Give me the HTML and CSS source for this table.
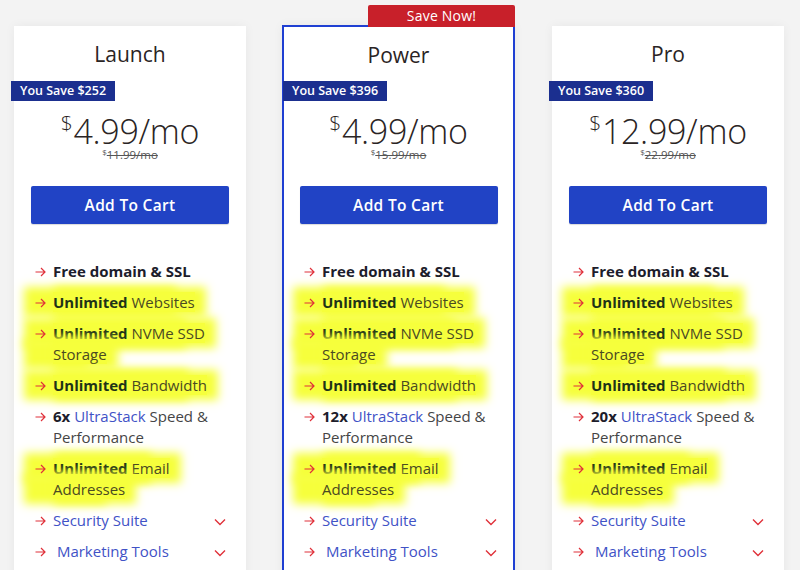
FILE: index.html
```html
<!DOCTYPE html>
<html>
<head>
<meta charset="utf-8">
<link rel="stylesheet" href="styles.css">
</head>
<body>
<svg width="0" height="0" class="defs">
  <defs>
    <symbol id="arr" viewBox="0 0 11 10"><path d="M0.5 5H10M6 1l4 4-4 4" fill="none" stroke="currentColor" stroke-width="1.2"/></symbol>
    <symbol id="chev" viewBox="0 0 12 8"><path d="M1 1.5l5 5 5-5" fill="none" stroke="currentColor" stroke-width="1.4"/></symbol>
  </defs>
</svg>
<div class="plans">
  <div class="card">
    <h2 class="title">Launch</h2>
    <div class="badge">You Save $252</div>
    <div class="price"><sup class="cur">$</sup>4.99/mo</div>
    <div class="old"><sup>$</sup><s>11.99/mo</s></div>
    <button class="cart">Add To Cart</button>
    <ul class="feats">
      <li><svg class="ar"><use href="#arr"/></svg><span class="tx"><b>Free domain &amp; SSL</b></span></li>
      <li><svg class="ar"><use href="#arr"/></svg><span class="tx"><span class="hl"><b>Unlimited</b> Websites</span></span></li>
      <li><svg class="ar"><use href="#arr"/></svg><span class="tx"><span class="hl"><b>Unlimited</b> NVMe SSD Storage</span></span></li>
      <li><svg class="ar"><use href="#arr"/></svg><span class="tx"><span class="hl"><b>Unlimited</b> Bandwidth</span></span></li>
      <li><svg class="ar"><use href="#arr"/></svg><span class="tx"><b>6x</b> <span class="lk">UltraStack</span> Speed &amp; Performance</span></li>
      <li><svg class="ar"><use href="#arr"/></svg><span class="tx"><span class="hl"><b>Unlimited</b> Email Addresses</span></span></li>
      <li class="more"><svg class="ar"><use href="#arr"/></svg><span class="tx lk">Security Suite</span><svg class="chev"><use href="#chev"/></svg></li>
      <li class="more"><svg class="ar"><use href="#arr"/></svg><span class="tx lk">&nbsp;Marketing Tools</span><svg class="chev"><use href="#chev"/></svg></li>
    </ul>
  </div>
  <div class="card featured">
    <div class="tab">Save Now!</div>
    <h2 class="title">Power</h2>
    <div class="badge">You Save $396</div>
    <div class="price"><sup class="cur">$</sup>4.99/mo</div>
    <div class="old"><sup>$</sup><s>15.99/mo</s></div>
    <button class="cart">Add To Cart</button>
    <ul class="feats">
      <li><svg class="ar"><use href="#arr"/></svg><span class="tx"><b>Free domain &amp; SSL</b></span></li>
      <li><svg class="ar"><use href="#arr"/></svg><span class="tx"><span class="hl"><b>Unlimited</b> Websites</span></span></li>
      <li><svg class="ar"><use href="#arr"/></svg><span class="tx"><span class="hl"><b>Unlimited</b> NVMe SSD Storage</span></span></li>
      <li><svg class="ar"><use href="#arr"/></svg><span class="tx"><span class="hl"><b>Unlimited</b> Bandwidth</span></span></li>
      <li><svg class="ar"><use href="#arr"/></svg><span class="tx"><b>12x</b> <span class="lk">UltraStack</span> Speed &amp; Performance</span></li>
      <li><svg class="ar"><use href="#arr"/></svg><span class="tx"><span class="hl"><b>Unlimited</b> Email Addresses</span></span></li>
      <li class="more"><svg class="ar"><use href="#arr"/></svg><span class="tx lk">Security Suite</span><svg class="chev"><use href="#chev"/></svg></li>
      <li class="more"><svg class="ar"><use href="#arr"/></svg><span class="tx lk">&nbsp;Marketing Tools</span><svg class="chev"><use href="#chev"/></svg></li>
    </ul>
  </div>
  <div class="card">
    <h2 class="title">Pro</h2>
    <div class="badge">You Save $360</div>
    <div class="price"><sup class="cur">$</sup>12.99/mo</div>
    <div class="old"><sup>$</sup><s>22.99/mo</s></div>
    <button class="cart">Add To Cart</button>
    <ul class="feats">
      <li><svg class="ar"><use href="#arr"/></svg><span class="tx"><b>Free domain &amp; SSL</b></span></li>
      <li><svg class="ar"><use href="#arr"/></svg><span class="tx"><span class="hl"><b>Unlimited</b> Websites</span></span></li>
      <li><svg class="ar"><use href="#arr"/></svg><span class="tx"><span class="hl"><b>Unlimited</b> NVMe SSD Storage</span></span></li>
      <li><svg class="ar"><use href="#arr"/></svg><span class="tx"><span class="hl"><b>Unlimited</b> Bandwidth</span></span></li>
      <li><svg class="ar"><use href="#arr"/></svg><span class="tx"><b>20x</b> <span class="lk">UltraStack</span> Speed &amp; Performance</span></li>
      <li><svg class="ar"><use href="#arr"/></svg><span class="tx"><span class="hl"><b>Unlimited</b> Email Addresses</span></span></li>
      <li class="more"><svg class="ar"><use href="#arr"/></svg><span class="tx lk">Security Suite</span><svg class="chev"><use href="#chev"/></svg></li>
      <li class="more"><svg class="ar"><use href="#arr"/></svg><span class="tx lk">&nbsp;Marketing Tools</span><svg class="chev"><use href="#chev"/></svg></li>
    </ul>
  </div>
</div>
</body>
</html>
```

FILE: styles.css
```css
* { box-sizing: border-box; }
html, body { margin: 0; padding: 0; }
body {
  background: #f3f3f3;
  font-family: "Open Sans", "Liberation Sans", sans-serif;
  color: #222;
  overflow: hidden;
  height: 570px;
}
.defs { position: absolute; width: 0; height: 0; }
.plans {
  display: flex;
  gap: 36px;
  padding: 26px 0 0 14px;
  align-items: flex-start;
}
.card {
  position: relative;
  width: 232px;
  height: 600px;
  background: #fff;
  box-shadow: 0 0 10px rgba(0,0,0,0.05);
  display: flex;
  flex-direction: column;
  align-items: center;
}
.card.featured {
  width: 233px;
  margin-top: -1px;
  border: 2px solid #1f3fd2;
}
.card.featured + .card { margin-left: 1px; }
.tab {
  position: absolute;
  top: -22px;
  right: -2px;
  width: 147px;
  height: 22px;
  background: #c8202a;
  color: #fff;
  font-size: 14px;
  line-height: 22px;
  text-align: center;
  border-radius: 2px 2px 0 0;
  letter-spacing: 0.2px;
}
.title {
  margin: 14px 0 0;
  font-size: 21px;
  font-weight: 400;
  line-height: 28px;
  color: #2a2424;
}
.featured .title { margin-top: 14px; }
.badge {
  align-self: flex-start;
  margin: 13px 0 0 -3px;
  height: 20px;
  padding: 0 9px 0 9px;
  background: #1b2f8f;
  color: #fff;
  font-size: 12.5px;
  font-weight: 600;
  line-height: 20px;
}
.featured .badge { margin: 12px 0 0 -1px; }
.price {
  margin-top: 12px;
  font-size: 34px;
  font-weight: 300;
  line-height: 36px;
  color: #2a2424;
  letter-spacing: -0.3px;
}
.price .cur {
  font-size: 21px;
  vertical-align: top;
  position: relative;
  top: 0;
  margin-right: 1px;
  line-height: 20px;
}
.old {
  font-size: 11.5px;
  line-height: 14px;
  color: #555;
  margin-top: -1px;
}
.old sup { font-size: 8px; vertical-align: top; line-height: 8px; }
.old s { text-decoration-thickness: 1px; }
.cart {
  margin-top: 24px;
  width: 198px;
  height: 38px;
  border: 0;
  border-radius: 2px;
  background: #2143c5;
  color: #fff;
  font-family: "Open Sans", "Liberation Sans", sans-serif;
  font-size: 15.5px;
  font-weight: 600;
  letter-spacing: 0.3px;
  box-shadow: 0 1px 1px rgba(0,0,0,0.15);
}
.feats {
  list-style: none;
  margin: 37px 0 0;
  padding: 0 20px 0 21px;
  width: 100%;
  display: flex;
  flex-direction: column;
  gap: 10px;
}
.featured .feats { padding: 0 16px 0 20px; }
.feats li {
  display: flex;
  align-items: flex-start;
  font-size: 15px;
  line-height: 21px;
  color: #454545;
}
.ar {
  position: relative;
  z-index: 1;
  flex: none;
  width: 11px;
  height: 10px;
  margin: 6px 7px 0 0;
  color: #e0313a;
}
.tx { flex: 1; min-width: 0; padding-right: 6px; }
.feats b { font-weight: 700; color: #1d1d2b; }
.lk { color: #4152c6; }
.hl {
  background: #f6ff3c;
  color: #4a4a22;
  box-decoration-break: clone;
  -webkit-box-decoration-break: clone;
  box-shadow: 6px 0 9px 5px #f6ff3c, -24px 0 9px 5px #f6ff3c;
}
.hl b { color: #1e3318; }
.chev {
  flex: none;
  width: 12px;
  height: 8px;
  margin: 8px 0 0 0;
  color: #e0313a;
}
```
